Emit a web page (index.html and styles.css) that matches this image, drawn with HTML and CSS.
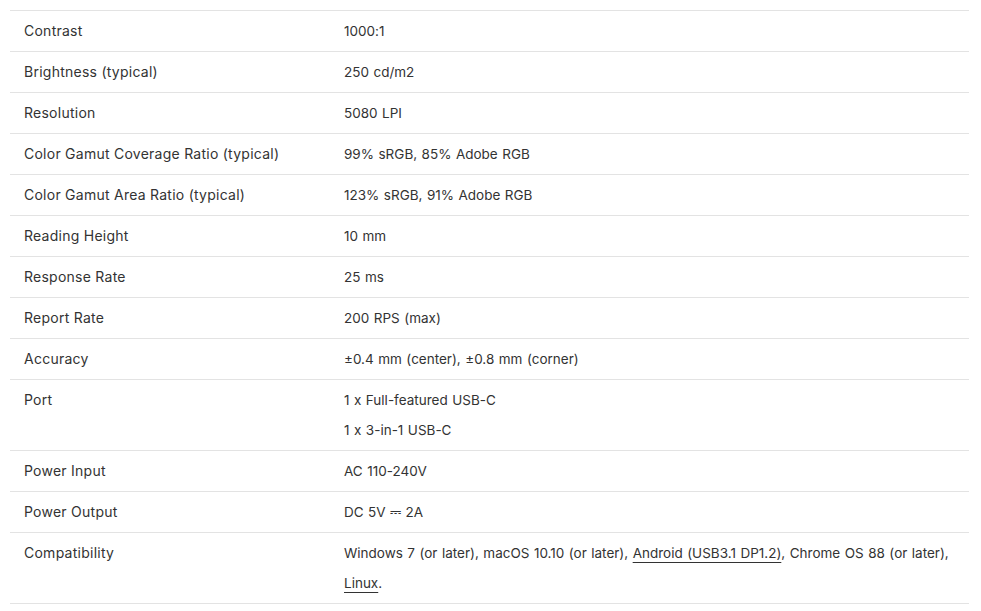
FILE: index.html
```html
<!DOCTYPE html>
<html>
<head>
<meta charset="utf-8">
<link rel="stylesheet" href="styles.css">
</head>
<body>
<div class="specs">
  <div class="row"><div class="label">Contrast</div><div class="value"><p>1000:1</p></div></div>
  <div class="row"><div class="label">Brightness (typical)</div><div class="value"><p>250 cd/m2</p></div></div>
  <div class="row"><div class="label">Resolution</div><div class="value"><p>5080 LPI</p></div></div>
  <div class="row"><div class="label">Color Gamut Coverage Ratio (typical)</div><div class="value"><p>99% sRGB, 85% Adobe RGB</p></div></div>
  <div class="row"><div class="label">Color Gamut Area Ratio (typical)</div><div class="value"><p>123% sRGB, 91% Adobe RGB</p></div></div>
  <div class="row"><div class="label">Reading Height</div><div class="value"><p>10 mm</p></div></div>
  <div class="row"><div class="label">Response Rate</div><div class="value"><p>25 ms</p></div></div>
  <div class="row"><div class="label">Report Rate</div><div class="value"><p>200 RPS (max)</p></div></div>
  <div class="row"><div class="label">Accuracy</div><div class="value"><p>±0.4 mm (center), ±0.8 mm (corner)</p></div></div>
  <div class="row"><div class="label">Port</div><div class="value"><p>1 x Full-featured USB-C</p><p>1 x 3-in-1 USB-C</p></div></div>
  <div class="row"><div class="label">Power Input</div><div class="value"><p>AC 110-240V</p></div></div>
  <div class="row"><div class="label">Power Output</div><div class="value"><p>DC 5V ⎓ 2A</p></div></div>
  <div class="row"><div class="label">Compatibility</div><div class="value"><p>Windows 7 (or later), macOS 10.10 (or later), <a href="#">Android (USB3.1 DP1.2)</a>, Chrome OS 88 (or later), <a href="#">Linux</a>.</p></div></div>
</div>
</body>
</html>
```

FILE: styles.css
```css
html, body {
  margin: 0;
  padding: 0;
  background: #ffffff;
}
body {
  font-family: "Inter", "Liberation Sans", sans-serif;
  font-size: 13.5px;
  color: #333333;
  font-feature-settings: "calt" 0;
}
.specs {
  margin: 10px 12px 0 10px;
  border-top: 1px solid #e3e3e3;
}
.row {
  display: grid;
  grid-template-columns: 320px 1fr;
  border-bottom: 1px solid #e3e3e3;
  padding: 5px 0;
}
.label {
  padding-left: 14px;
  line-height: 30px;
  font-size: 14px;
  letter-spacing: 0.25px;
}
.value {
  padding: 0 14px;
  word-spacing: 0.7px;
}
.value p {
  margin: 0;
  line-height: 30px;
}
.value a {
  color: #333333;
  text-decoration: underline;
  text-decoration-thickness: 1px;
  text-underline-offset: 4px;
}
```
